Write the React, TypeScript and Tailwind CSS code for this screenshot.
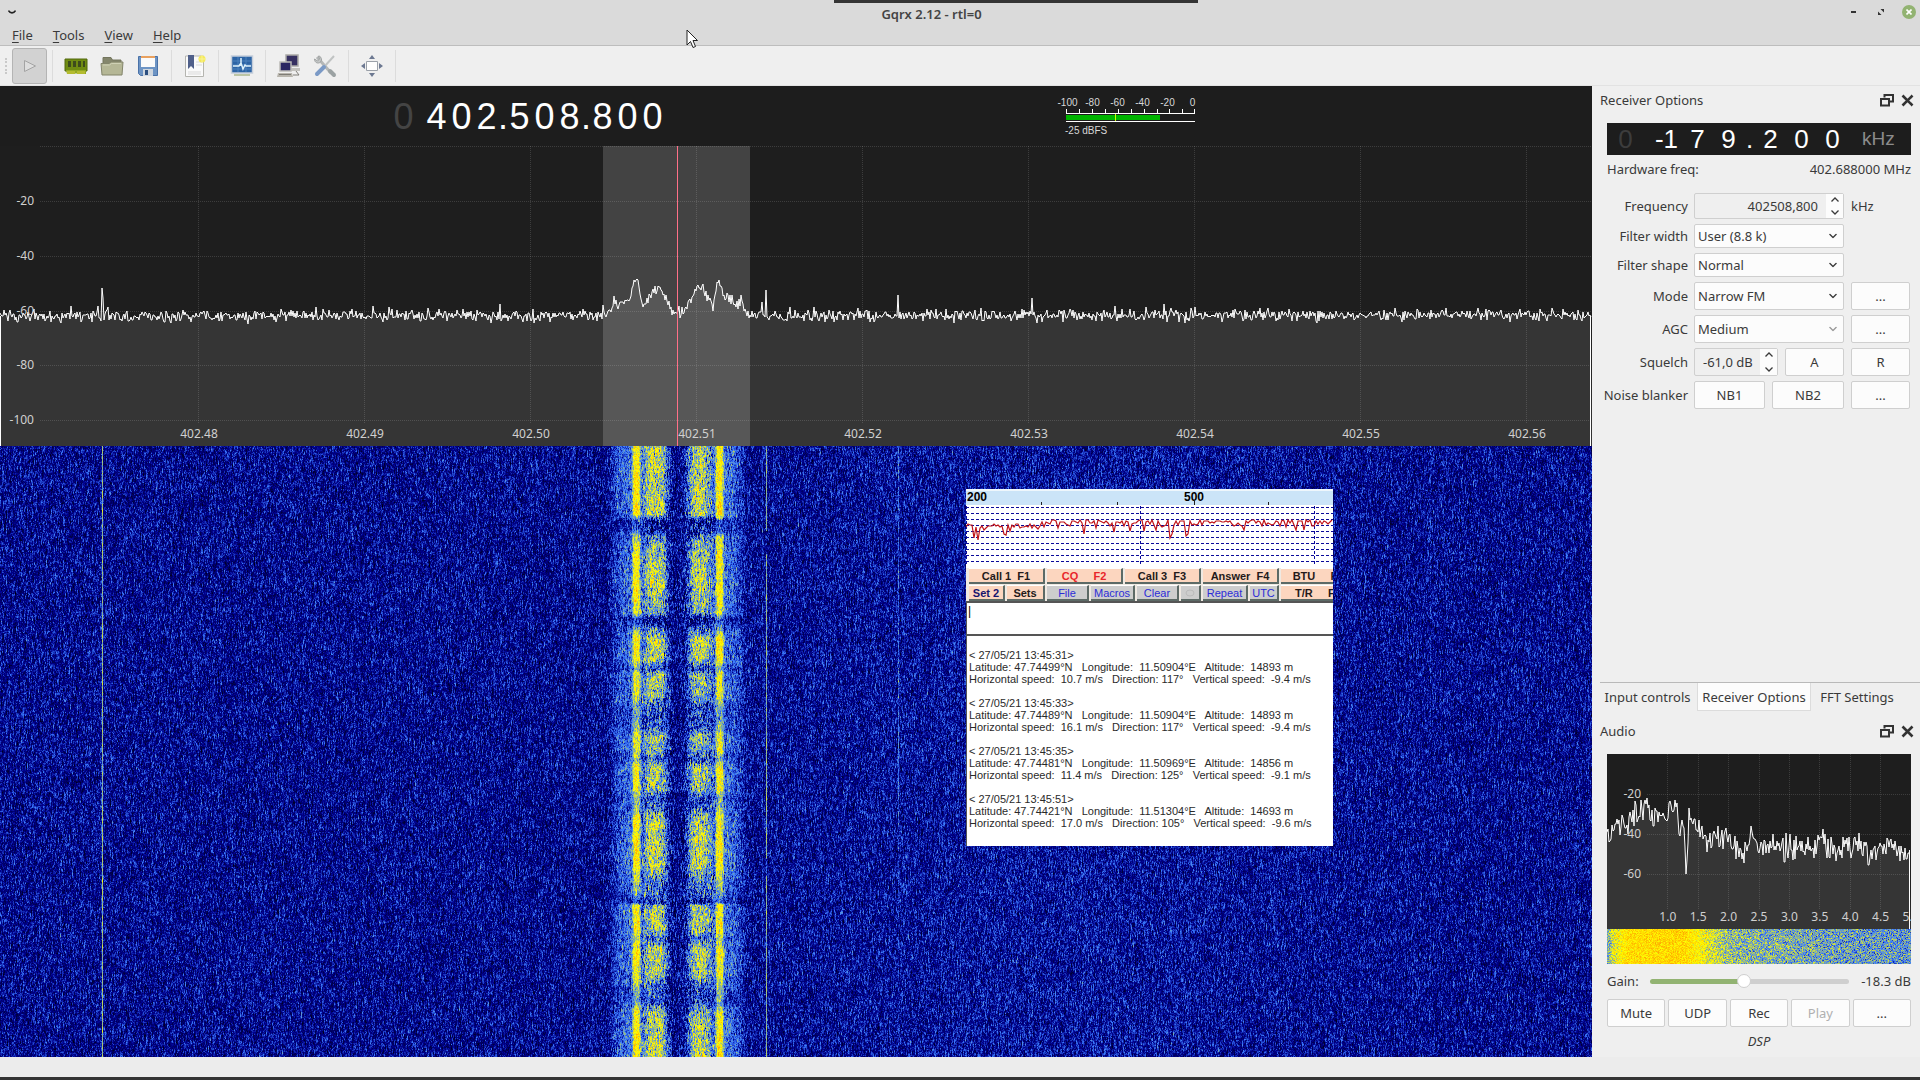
import { useEffect, useRef } from "react"
import type { ReactNode } from "react"
import clsx from "clsx"

const PLOT_W = 1592
const PLOT_H = 300
const FALL_H = 611

const freqLabels = ["402.48", "402.49", "402.50", "402.51", "402.52", "402.53", "402.54", "402.55", "402.56"]
const dbLabels = [
  { text: "-20", y: 55 },
  { text: "-40", y: 110 },
  { text: "-60", y: 165 },
  { text: "-80", y: 219 },
  { text: "-100", y: 274 },
]
const audioLabels = ["1.0", "1.5", "2.0", "2.5", "3.0", "3.5", "4.0", "4.5", "5.0"]

const log = [
  ["< 27/05/21 13:45:31>", "Latitude: 47.74499°N   Longitude:  11.50904°E   Altitude:  14893 m", "Horizontal speed:  10.7 m/s   Direction: 117°   Vertical speed:  -9.4 m/s"],
  ["< 27/05/21 13:45:33>", "Latitude: 47.74489°N   Longitude:  11.50904°E   Altitude:  14893 m", "Horizontal speed:  16.1 m/s   Direction: 117°   Vertical speed:  -9.4 m/s"],
  ["< 27/05/21 13:45:35>", "Latitude: 47.74481°N   Longitude:  11.50969°E   Altitude:  14856 m", "Horizontal speed:  11.4 m/s   Direction: 125°   Vertical speed:  -9.1 m/s"],
  ["< 27/05/21 13:45:51>", "Latitude: 47.74421°N   Longitude:  11.51304°E   Altitude:  14693 m", "Horizontal speed:  17.0 m/s   Direction: 105°   Vertical speed:  -9.6 m/s"],
]

function makeRandom(seed: number) {
  let s = seed
  return () => {
    s = (s + 0x6d2b79f5) | 0
    let t = Math.imul(s ^ (s >>> 15), 1 | s)
    t = (t + Math.imul(t ^ (t >>> 7), 61 | t)) ^ t
    return ((t ^ (t >>> 14)) >>> 0) / 4294967296
  }
}

function interpolate(points: number[][], x: number) {
  for (let i = 1; i < points.length; i++) {
    if (x <= points[i][0]) {
      const [x0, y0] = points[i - 1]
      const [x1, y1] = points[i]
      return y0 + ((y1 - y0) * (x - x0)) / (x1 - x0)
    }
  }
  return points[points.length - 1][1]
}

// signal shape in the spectrum, plot pixels
const signal = [
  [0, 170], [600, 170], [607, 168], [611, 164], [614, 153], [618, 162], [624, 156], [630, 154], [634, 133], [637, 133],
  [642, 162], [650, 148], [655, 143], [659, 142], [665, 152], [672, 165], [676, 165], [682, 167], [690, 154], [697, 140],
  [702, 142], [708, 152], [713, 161], [717, 134], [720, 136], [723, 150], [730, 153], [736, 157], [741, 156], [745, 164],
  [748, 170], [1592, 169],
]
const spikes: Record<number, number> = {
  98: 160, 102: 142, 103: 152, 316: 161, 500: 158, 762: 156, 766: 144, 898: 149, 1032: 152, 1164: 158,
}

function spectrumPoints() {
  const rnd = makeRandom(7)
  const pts: string[] = []
  for (let x = 0; x < PLOT_W; x++) {
    const inSignal = x > 610 && x < 746
    const n = rnd() + rnd() + rnd() - 1.5
    let y = interpolate(signal, x) + n * (inSignal ? 6 : 6)
    if (!inSignal && rnd() > 0.97) y -= 4
    if (spikes[x]) y = spikes[x]
    pts.push(`${x},${Math.round(y)}`)
  }
  return pts.join(" ")
}

const audioShape = [
  [0, 80], [3, 83], [10, 70], [20, 68], [30, 62], [36, 57], [39, 49], [44, 64], [50, 62], [56, 60], [62, 58], [66, 54], [70, 58],
  [73, 76], [77, 72], [79, 118], [82, 60], [88, 66], [94, 74], [100, 86], [110, 82], [120, 90], [128, 92], [134, 98], [142, 88],
  [147, 84], [153, 100], [160, 92], [175, 96], [190, 92], [204, 94], [213, 86], [225, 96], [240, 92], [258, 94], [263, 106],
  [270, 94], [285, 90], [296, 98], [303, 94],
]

function audioPoints() {
  const rnd = makeRandom(21)
  const pts: string[] = []
  for (let x = 0; x < 303; x++) {
    const n = rnd() + rnd() - 1
    pts.push(`${x},${Math.round(interpolate(audioShape, x) + n * 17)}`)
  }
  return pts.join(" ")
}

function scopePoints() {
  const rnd = makeRandom(4)
  const dips = [8, 12, 38, 40, 118, 148, 164, 178, 190, 205, 221, 278, 330, 338]
  const pts: string[] = []
  for (let x = 0; x < 367; x += 2) {
    const base = x < 75 ? 21 : 17
    const dip = dips.some((d) => Math.abs(d - x) < 2) ? 10 : 0
    pts.push(`${x},${Math.round(base + rnd() * rnd() * 9 + dip)}`)
  }
  return pts.join(" ")
}

function palette(level: number): [number, number, number] {
  const i = Math.max(20, Math.min(249, level))
  if (i < 70) return [0, 0, (140 * (i - 20)) / 50]
  if (i < 100) {
    const k = (i - 70) / 30
    return [60 * k, 125 * k, 115 * k + 140]
  }
  if (i < 150) {
    const k = (i - 100) / 50
    return [195 * k + 60, 130 * k + 125, 255 - 255 * k]
  }
  return [255, 255 - (255 * (i - 150)) / 100, 0]
}

// how strong the transmission is over time, waterfall pixels
const activity = [
  [0, 0.95], [68, 1], [74, 0.15], [84, 0.1], [90, 0.6], [98, 0.85], [140, 1], [166, 0.8], [173, 0.1], [178, 0.25], [186, 0.7],
  [194, 1], [214, 0.95], [223, 0.4], [228, 0.9], [248, 0.85], [258, 0.5], [270, 0.4], [282, 0.5], [290, 0.9], [303, 0.8],
  [312, 0.45], [322, 0.95], [342, 0.85], [352, 0.45], [362, 0.55], [372, 0.95], [418, 1], [432, 0.7], [448, 0.45], [456, 0.1],
  [459, 0.9], [482, 0.95], [492, 0.6], [504, 1], [530, 0.85], [542, 0.45], [556, 0.4], [566, 0.9], [611, 1],
]

function bump(x: number, center: number, width: number, power = 4) {
  return Math.exp(-Math.pow(Math.abs(x - center) / width, power))
}

function Waterfall() {
  const ref = useRef<HTMLCanvasElement>(null)

  useEffect(() => {
    const ctx = ref.current?.getContext("2d")
    if (!ctx) return
    const rnd = makeRandom(99)
    const image = ctx.createImageData(PLOT_W, FALL_H)
    const previous = new Float32Array(PLOT_W)
    for (let y = 0; y < FALL_H; y++) {
      const on = interpolate(activity, y)
      for (let x = 0; x < PLOT_W; x++) {
        const raw = (rnd() + rnd() + rnd() - 1.5) * 30
        const noise = previous[x] * 0.5 + raw * 0.75
        previous[x] = noise
        const glow = 4 * bump(x, 1050, 260, 2)
        let level = 69 + noise + glow
        if (x > 600 && x < 754) {
          const skirt = (bump(x, 631, 20, 6) + bump(x, 726, 18, 6)) * 17
          const near = (bump(x, 628, 10, 2) + bump(x, 727, 9, 2)) * 12 * on
          const middle = bump(x, 677, 36, 10) * 12 * (1 - bump(x, 677, 12))
          const blobs = (bump(x, 656, 11, 3) + bump(x, 699, 11, 3)) * 54 * on * on
          const tones = (bump(x, 636, 4) + bump(x, 719, 4)) * (56 * on + 8)
          const rough = noise * 0.5 * Math.min(1, bump(x, 656, 16) + bump(x, 699, 16))
          level += (skirt + middle) * Math.min(1, on + 0.3) + near + blobs + tones + rough
        }
        if (x === 102) level = 124 + noise * 0.6
        if (x === 101) level += 10
        if (x === 766) level = (y > 84 && y < 108) || (y > 412 && y < 430) ? level + 8 : 120 + noise * 0.6
        if (x === 762) level += 9
        if (x === 898) level += y < 380 ? 26 : 10
        if (x === 1032 || x === 1430) level += 7
        const [r, g, b] = palette(level)
        const p = (y * PLOT_W + x) * 4
        image.data[p] = r
        image.data[p + 1] = g
        image.data[p + 2] = b
        image.data[p + 3] = 255
      }
    }
    ctx.putImageData(image, 0, 0)
  }, [])

  return <canvas ref={ref} width={PLOT_W} height={FALL_H} className="absolute inset-0 w-full h-full" />
}

function AudioWaterfall() {
  const ref = useRef<HTMLCanvasElement>(null)

  useEffect(() => {
    const ctx = ref.current?.getContext("2d")
    if (!ctx) return
    const rnd = makeRandom(5)
    const shape = [[0, 112], [6, 142], [20, 163], [75, 166], [92, 152], [104, 138], [125, 122], [160, 118], [220, 113], [304, 108]]
    const image = ctx.createImageData(304, 35)
    for (let y = 0; y < 35; y++) {
      for (let x = 0; x < 304; x++) {
        const spread = x > 12 && x < 95 ? 22 : 36
        const [r, g, b] = palette(interpolate(shape, x) + (rnd() + rnd() - 1) * spread)
        const p = (y * 304 + x) * 4
        image.data[p] = r
        image.data[p + 1] = g
        image.data[p + 2] = b
        image.data[p + 3] = 255
      }
    }
    ctx.putImageData(image, 0, 0)
  }, [])

  return <canvas ref={ref} width={304} height={35} className="block w-full h-[35px]" />
}

function TitleBar() {
  return (
    <header className="bg-[#dadada] border-b border-[#bdbdbd] h-[46px] flex flex-col">
      <div className="h-6 flex items-center">
        <button aria-label="Window menu" className="w-6 h-6 flex items-center justify-center">
          <svg width="8" height="4" viewBox="0 0 8 4" fill="none" stroke="#222" strokeWidth="1.6">
            <path d="M0.5 0.6C2 3.6 6 3.6 7.5 0.6" />
          </svg>
        </button>
        <h1 className="flex-1 text-center text-[13px] leading-6 font-semibold text-[#444] pt-1">Gqrx 2.12 - rtl=0</h1>
        <div className="w-[81px] flex items-center justify-end pr-1">
          <button aria-label="Minimize" className="w-7 h-6 flex items-center justify-center">
            <span className="w-[5px] h-[2px] bg-[#333]" />
          </button>
          <button aria-label="Maximize" className="w-7 h-6 mr-[7px] flex items-center justify-center">
            <svg width="8" height="8" viewBox="0 0 8 8" fill="#333">
              <path d="M3.5 1H7v3.5zM1 3.5V7h3.5z" />
            </svg>
          </button>
          <button aria-label="Close" className="w-[14px] h-[14px] rounded-full bg-[#92b372] flex items-center justify-center">
            <svg width="6" height="6" viewBox="0 0 6 6" stroke="#fff" strokeWidth="1.6">
              <path d="M0.5 0.5l5 5M5.5 0.5l-5 5" />
            </svg>
          </button>
        </div>
      </div>
      <nav className="flex items-center gap-5 pl-3 h-[22px] text-[13px] leading-[22px] text-[#3a3a3a]">
        {["File", "Tools", "View", "Help"].map((m) => (
          <button key={m}>
            <span className="underline underline-offset-2">{m[0]}</span>
            {m.slice(1)}
          </button>
        ))}
      </nav>
    </header>
  )
}

function ToolButton({ label, children }: { label: string; children: ReactNode }) {
  return (
    <button aria-label={label} className="w-9 h-9 flex items-center justify-center">
      <svg width="24" height="24" viewBox="0 0 24 24">
        {children}
      </svg>
    </button>
  )
}

function Separator() {
  return (
    <span className="w-[11px] flex justify-center">
      <span className="w-px h-8 bg-[#dcdcdc]" />
    </span>
  )
}

function Toolbar() {
  return (
    <div className="h-10 bg-[#efefef] flex items-center border-b border-[#e2e2e2]">
      <span className="w-3 flex justify-center">
        <span className="h-4 border-l-2 border-dotted border-[#c9c9c9]" />
      </span>
      <button aria-label="Start" className="w-[35px] h-9 bg-[#d2d2d2] border border-[#b4b4b4] rounded-[3px] flex items-center justify-center">
        <svg width="16" height="16" viewBox="0 0 16 16" fill="#dedede" stroke="#a4a4a4">
          <path d="M2.5 2.5L13.5 8L2.5 13.5z" />
        </svg>
      </button>
      <Separator />
      <ToolButton label="Hardware">
        <path d="M1 5h22v12H1z" fill="#6f8c12" stroke="#53690d" />
        <path d="M2 16h20v4h-9l-1-1-1 1H3z" fill="#93a822" />
        <path d="M4 7h3v6H4zM9 7h3v6H9zM14 7h3v6h-3zM19 7h2v6h-2z" fill="#3d4c1c" />
        <path d="M4 17v3M6 17v3M8 17v3M10 17v3M14 17v3M16 17v3M18 17v3M20 17v3" stroke="#d5cf3c" />
      </ToolButton>
      <ToolButton label="Open">
        <path d="M3 3.500h8l1.500 2.500H21v6H3z" fill="#84866c" stroke="#74765e" />
        <path d="M1 9.500h8l2-1.500h12l-1 13H2z" fill="#b5b796" stroke="#83856b" />
        <path d="M3 11h6.500l2-1.500H21" fill="none" stroke="#cfd1b5" />
      </ToolButton>
      <ToolButton label="Save">
        <path d="M2.500 2.500h19v19H4.500l-2-2z" fill="#6d94c4" stroke="#4a72a8" />
        <path d="M5 2h14v11H5z" fill="#fafafa" />
        <path d="M5 2h14v2H5z" fill="#e9a15f" />
        <path d="M7 15h10v7H7z" fill="#cfd6de" />
        <path d="M9 16h3v5H9z" fill="#2c4f80" />
      </ToolButton>
      <Separator />
      <ToolButton label="Bookmark">
        <path d="M2.500 2h18v20.500h-18z" fill="#fafafa" stroke="#b5b5b0" />
        <path d="M5 1h6v14l-3-3-3 3z" fill="#50608a" />
        <path d="M13 8h6M13 11h6M5 18h13M5 20h13" stroke="#d9d9d9" />
        <circle cx="19" cy="5" r="3.500" fill="#f5ea5a" />
        <path d="M19 1v8M15 5h8" stroke="#f8f29a" />
      </ToolButton>
      <Separator />
      <ToolButton label="DSP">
        <path d="M1.500 2h21v17h-21z" fill="#2d64a5" stroke="#c5cedb" strokeWidth="1.500" />
        <path d="M3 7h18M3 11h18M3 15h18M8 3v15M16 3v15" stroke="#4c82bd" />
        <path d="M3 12h6l2-3 2 6 2-4 1 1h5M11 4v8" fill="none" stroke="#dff2fb" strokeWidth="1.500" />
        <path d="M4 21h16" stroke="#bcc5a5" strokeWidth="2" />
      </ToolButton>
      <Separator />
      <ToolButton label="Remote control">
        <path d="M9 1h12v11H9z" fill="#363061" stroke="#aaa9a7" strokeWidth="1.500" />
        <path d="M11 14h12v3H11z" fill="#c2c1bd" />
        <path d="M3 8h11v9H3z" fill="#2b2662" stroke="#bcbbb7" strokeWidth="1.500" />
        <path d="M1 19h14l1 4H0z" fill="#b8b5ad" />
        <path d="M2 20.500h12M19 17l3 4h-6" fill="none" stroke="#7e7c76" />
      </ToolButton>
      <ToolButton label="Settings">
        <path d="M4 3l14 16" stroke="#b4b7b7" strokeWidth="3" />
        <path d="M17 17l4 4" stroke="#9ba2a3" strokeWidth="4" strokeLinecap="round" />
        <path d="M1.500 5c0 4 4 5 6 3l1-2c0-2-1-4-3-4l1 3-2 2z" fill="#c4c7c7" stroke="#a0a3a3" />
        <path d="M21 2L11 13" stroke="#c0c3c3" strokeWidth="2" />
        <path d="M11 13l-7 7" stroke="#7b9ac6" strokeWidth="4" strokeLinecap="round" />
      </ToolButton>
      <Separator />
      <ToolButton label="Fullscreen">
        <path d="M6.500 7.500h11v9h-11z" fill="#fdfdfd" stroke="#9aa0a8" />
        <path d="M12 1l3 4H9zM12 23l3-4H9zM1 12l4-3v6zM23 12l-4-3v6z" fill="#6c7891" />
      </ToolButton>
      <Separator />
    </div>
  )
}

function SignalMeter() {
  return (
    <div className="w-[150px] font-['Liberation_Sans',sans-serif] text-[10px] leading-3 text-[#d8d8d8]">
      <div className="flex">
        {["-100", "-80", "-60", "-40", "-20", "0"].map((t) => (
          <span key={t} className="w-[25px] text-center">
            {t}
          </span>
        ))}
      </div>
      <svg width="132" height="14" viewBox="0 0 132 14" className="ml-[10px] block">
        <path d="M1.500 0v4M14.500 0v4M27.500 0v4M40.500 0v4M53.500 0v4M66.500 0v4M79.500 0v4M92.500 0v4M104.500 0v4M117.500 0v4M129.500 0v4" stroke="#fff" />
        <path d="M1 4.500h129M1 12.500h129" stroke="#fff" />
        <path d="M1 6h94v5H1z" fill="#00b400" />
        <path d="M50.500 5v7" stroke="#c8ff00" />
      </svg>
      <div className="pl-[10px] pt-[2px]">-25 dBFS</div>
    </div>
  )
}

function FrequencyHeader() {
  return (
    <div className="h-[60px] bg-[#1d1d1d] flex font-['Liberation_Sans',sans-serif]">
      <div className="pl-[391px] flex pt-2 text-[36px] leading-[46px] text-white">
        <span className="w-[25px] mr-2 text-center text-[#444]">0</span>
        {"402.508.800".split("").map((c, i) => (
          <span key={i} className={clsx("flex justify-center", c === "." ? "w-2" : "w-[25px]")}>
            {c}
          </span>
        ))}
      </div>
      <div className="pl-[390px] pt-[11px]">
        <SignalMeter />
      </div>
    </div>
  )
}

function Spectrum() {
  const points = spectrumPoints()
  return (
    <div className="relative h-[300px] bg-[#1e1e1e] overflow-hidden">
      <svg viewBox={`0 0 ${PLOT_W} ${PLOT_H}`} preserveAspectRatio="none" className="absolute inset-0 w-full h-full">
        <polygon points={`0,300 ${points} 1592,300`} fill="#353535" />
        <g stroke="#fff" strokeOpacity="0.14" strokeDasharray="1 1">
          {[0, 55, 110, 165, 219, 274].map((y) => (
            <path key={y} d={`M40 ${y}.5H1592`} />
          ))}
          {freqLabels.map((f, i) => (
            <path key={f} d={`M${198 + i * 166}.5 0V278`} />
          ))}
        </g>
        <rect x="603" y="0" width="147" height="300" fill="#fff" fillOpacity="0.17" />
        <path d="M0.500 170V300M1590.500 170V300" stroke="#fff" />
        <polyline points={points} fill="none" stroke="#fff" />
        <path d="M677.500 0V300" stroke="#ff7088" />
      </svg>
      {dbLabels.map((l) => (
        <span key={l.text} className="absolute left-0 w-[34px] -translate-y-1/2 text-right text-[12px] leading-4 text-[#d0d0d0]" style={{ top: l.y }}>
          {l.text}
        </span>
      ))}
      {freqLabels.map((f, i) => (
        <span key={f} className="absolute bottom-1 -translate-x-1/2 text-[12px] leading-4 text-[#d0d0d0]" style={{ left: `${((199 + i * 166) / PLOT_W) * 100}%` }}>
          {f}
        </span>
      ))}
    </div>
  )
}

function MacroButton({ className, children }: { className: string; children?: ReactNode }) {
  return (
    <button
      className={clsx(
        "h-4 flex items-center justify-center border-r-2 border-b-2 border-[#5c6a66] border-t border-t-white text-[11px] leading-3 whitespace-pre overflow-hidden shrink-0",
        className,
      )}
    >
      {children}
    </button>
  )
}

function DecoderWindow() {
  return (
    <section className="absolute left-[966px] top-[43px] w-[367px] h-[357px] bg-white overflow-hidden flex flex-col font-['Liberation_Sans',sans-serif]">
      <svg viewBox="0 0 367 79" width="367" height="79" className="block shrink-0">
        <rect width="367" height="16" fill="#cbe4f8" />
        <rect width="367" height="2" fill="#eef6fc" />
        <g fontFamily="Liberation Sans, sans-serif" fontWeight="700" fontSize="12">
          <text x="1" y="12">200</text>
          <text x="218" y="12">500</text>
        </g>
        <path d="M75.500 13v3M151.500 13v3M228.500 11v5M302.500 13v3" stroke="#222" />
        <g stroke="#0a0a9a" strokeDasharray="3 2">
          {[18, 24, 30, 36, 42, 48, 54, 60, 66, 72].map((y) => (
            <path key={y} d={`M0 ${y}.5H367`} />
          ))}
          <path d="M174.500 17V76M348.500 17V76M0.500 17V76" />
        </g>
        <polyline points={scopePoints()} transform="translate(0 14)" fill="none" stroke="#c01418" strokeWidth="1.200" />
      </svg>
      <div className="bg-[#efe9e2] pl-[3px] flex flex-col gap-px shrink-0">
        <div className="flex gap-[2px] font-bold text-[#241a1a]">
          <MacroButton className="w-[76px] bg-[#fcd6bf]">Call 1  F1</MacroButton>
          <MacroButton className="w-[76px] bg-[#fcd6bf] text-[#e8262a]">CQ     F2</MacroButton>
          <MacroButton className="w-[76px] bg-[#fcd6bf]">Call 3  F3</MacroButton>
          <MacroButton className="w-[76px] bg-[#fcd6bf]">Answer  F4</MacroButton>
          <MacroButton className="w-[76px] bg-[#fcd6bf]">BTU     F5</MacroButton>
        </div>
        <div className="flex gap-[2px] text-[#2c2cd8]">
          <MacroButton className="w-9 bg-[#fcd6bf] font-bold text-[#15156e]">Set 2</MacroButton>
          <MacroButton className="w-[38px] bg-[#fcd6bf] font-bold text-[#241a1a]">Sets</MacroButton>
          <MacroButton className="w-[42px] bg-[#cdcdcd]">File</MacroButton>
          <MacroButton className="w-11 bg-[#cdcdcd]">Macros</MacroButton>
          <MacroButton className="w-[42px] bg-[#cdcdcd]">Clear</MacroButton>
          <MacroButton className="w-5 bg-[#cdcdcd]">
            <svg width="12" height="10" viewBox="0 0 12 10" fill="none" stroke="#bbb">
              <ellipse cx="6" cy="5" rx="4" ry="3" />
            </svg>
          </MacroButton>
          <MacroButton className="w-[45px] bg-[#cdcdcd]">Repeat</MacroButton>
          <MacroButton className="w-[29px] bg-[#cdcdcd]">UTC</MacroButton>
          <MacroButton className="w-[76px] bg-[#fcd6bf] font-bold text-[#241a1a]">T/R     F6</MacroButton>
        </div>
      </div>
      <textarea
        aria-label="Transmit text"
        defaultValue="|"
        className="block h-[35px] shrink-0 w-full resize-none bg-white border-t-2 border-b-2 border-l border-[#555] px-px text-[12px] leading-4 text-black"
      />
      <div className="flex-1 border-l border-[#555] pl-[2px] pt-[13px] flex flex-col gap-3 text-[11px] leading-3 text-[#2a2a2a] whitespace-pre">
        {log.map((entry) => (
          <div key={entry[0]}>
            {entry.map((line) => (
              <p key={line}>{line}</p>
            ))}
          </div>
        ))}
      </div>
    </section>
  )
}

function PanelTitle({ title }: { title: string }) {
  return (
    <div className="h-7 pl-2 pr-[6px] flex items-center justify-between">
      <h2>{title}</h2>
      <div className="flex items-center gap-[7px]">
        <button aria-label={`Float ${title}`}>
          <svg width="14" height="14" viewBox="0 0 14 14" fill="none" stroke="#333" strokeWidth="2">
            <path d="M4.500 4.500V2H13v6.500H9.500" />
            <path d="M1 6h8v6.500H1z" />
          </svg>
        </button>
        <button aria-label={`Close ${title}`}>
          <svg width="13" height="13" viewBox="0 0 13 13" stroke="#333" strokeWidth="2.600">
            <path d="M1.500 1.500l10 10M11.500 1.500l-10 10" />
          </svg>
        </button>
      </div>
    </div>
  )
}

function Chevron({ up, className }: { up?: boolean; className?: string }) {
  return (
    <svg width="8" height="5" viewBox="0 0 8 5" fill="none" stroke="currentColor" strokeWidth="1.300" className={className}>
      <path d={up ? "M0.500 4.500L4 1L7.500 4.500" : "M0.500 0.500L4 4L7.500 0.500"} />
    </svg>
  )
}

function PushButton({ className, disabled, children }: { className?: string; disabled?: boolean; children: ReactNode }) {
  return (
    <button disabled={disabled} className={clsx("h-7 bg-[#fcfcfc] border border-[#cfcfcf] rounded-[2px] disabled:text-[#b0b0b0]", className)}>
      {children}
    </button>
  )
}

function Row({ label, id, children }: { label: string; id?: string; children: ReactNode }) {
  return (
    <div className="flex items-center">
      <label htmlFor={id} className="w-[81px] mr-[6px] flex justify-end whitespace-nowrap">
        {label}
      </label>
      <div className="flex items-center gap-[7px]">{children}</div>
    </div>
  )
}

function Combo({ id, value, className, faded }: { id: string; value: string; className: string; faded?: boolean }) {
  return (
    <div className={clsx("relative w-[150px]", className)}>
      <select id={id} className="appearance-none w-full h-full bg-[#fcfcfc] border border-[#cfcfcf] rounded-[2px] pl-[3px]">
        <option>{value}</option>
      </select>
      <Chevron className={clsx("absolute right-[7px] top-1/2 -translate-y-1/2 pointer-events-none", faded && "text-[#999]")} />
    </div>
  )
}

function SpinBox({ id, value, className, inputClass }: { id: string; value: string; className: string; inputClass: string }) {
  return (
    <div className={clsx("flex border border-[#cfcfcf] rounded-[2px] bg-[#efefef]", className)}>
      <input id={id} defaultValue={value} className={clsx("min-w-0 flex-1 bg-transparent", inputClass)} />
      <div className="w-[17px] bg-[#fcfcfc] flex flex-col items-center justify-between py-[3px]">
        <button aria-label="Increase">
          <Chevron up className="block" />
        </button>
        <button aria-label="Decrease">
          <Chevron className="block" />
        </button>
      </div>
    </div>
  )
}

function OffsetDisplay() {
  return (
    <div className="h-8 bg-[#1d1d1d] flex items-center pl-[3px] font-['Liberation_Sans',sans-serif] text-[26px] leading-8 text-white">
      <span className="w-[31px] mr-[10px] text-center text-[#3c3c3c]">0</span>
      {["-1", "7", "9", ".", "2", "0", "0"].map((c, i) => (
        <span key={i} className={clsx("text-center", c === "." ? "w-[11px]" : "w-[31px]")}>
          {c}
        </span>
      ))}
      <span className="pl-[14px] text-[19px] text-[#8c8c8c]">kHz</span>
    </div>
  )
}

function ReceiverOptions() {
  return (
    <section>
      <PanelTitle title="Receiver Options" />
      <div className="pl-[15px] pr-[9px] mt-[9px]">
        <OffsetDisplay />
        <div className="h-7 flex items-center justify-between">
          <span>Hardware freq:</span>
          <span>402.688000 MHz</span>
        </div>
        <div className="mt-[10px] flex flex-col gap-[5px]">
          <Row label="Frequency" id="freq">
            <SpinBox id="freq" value="402508,800" className="w-[150px] h-[26px]" inputClass="text-right pr-2" />
            <span>kHz</span>
          </Row>
          <Row label="Filter width" id="width">
            <Combo id="width" value="User (8.8 k)" className="h-6" />
          </Row>
          <Row label="Filter shape" id="shape">
            <Combo id="shape" value="Normal" className="h-6" />
          </Row>
          <Row label="Mode" id="mode">
            <Combo id="mode" value="Narrow FM" className="h-7" />
            <PushButton className="w-[59px]">...</PushButton>
          </Row>
          <Row label="AGC" id="agc">
            <Combo id="agc" value="Medium" className="h-7" faded />
            <PushButton className="w-[59px]">...</PushButton>
          </Row>
          <Row label="Squelch" id="squelch">
            <SpinBox id="squelch" value="-61,0 dB" className="w-[84px] h-7" inputClass="pl-2" />
            <PushButton className="w-[59px]">A</PushButton>
            <PushButton className="w-[59px]">R</PushButton>
          </Row>
          <Row label="Noise blanker" id="nb1">
            <button id="nb1" className="w-[71px] h-7 bg-[#fcfcfc] border border-[#cfcfcf] rounded-[2px]">
              NB1
            </button>
            <PushButton className="w-[72px]">NB2</PushButton>
            <PushButton className="w-[59px]">...</PushButton>
          </Row>
        </div>
      </div>
    </section>
  )
}

function AudioPanel() {
  const points = audioPoints()
  return (
    <section className="pt-[6px]">
      <PanelTitle title="Audio" />
      <div className="pl-[15px] pr-[9px] mt-[9px]">
        <div className="relative h-[175px] bg-[#1e1e1e] overflow-hidden">
          <svg viewBox="0 0 304 175" preserveAspectRatio="none" className="absolute inset-0 w-full h-full">
            <polygon points={`0,175 ${points} 304,175`} fill="#353535" />
            <g stroke="#fff" strokeOpacity="0.14" strokeDasharray="1 1">
              <path d="M40 40.500H304M40 80.500H304M40 120.500H304" />
              <path d="M60.500 0V155M91.500 0V155M121.500 0V155M152.500 0V155M182.500 0V155M212.500 0V155M243.500 0V155M273.500 0V155" />
            </g>
            <polyline points={points} fill="none" stroke="#fff" />
            <path d="M302.500 96V175" stroke="#fff" />
          </svg>
          {["-20", "-40", "-60"].map((t, i) => (
            <span key={t} className="absolute left-0 w-[34px] -translate-y-1/2 text-right text-[12px] leading-4 text-[#d0d0d0]" style={{ top: 40 + i * 40 }}>
              {t}
            </span>
          ))}
          {audioLabels.map((t, i) => (
            <span key={t} className="absolute bottom-1 -translate-x-1/2 text-[12px] leading-4 text-[#d0d0d0]" style={{ left: `${20 + i * 10}%` }}>
              {t}
            </span>
          ))}
        </div>
        <AudioWaterfall />
        <div className="h-[34px] flex items-center">
          <label htmlFor="gain" className="w-[43px]">
            Gain:
          </label>
          <input
            id="gain"
            type="range"
            min="0"
            max="100"
            defaultValue="47"
            className="appearance-none bg-transparent flex-1 mr-[6px] min-w-0 h-5 [&::-webkit-slider-runnable-track]:h-[5px] [&::-webkit-slider-runnable-track]:rounded-full [&::-webkit-slider-runnable-track]:bg-[linear-gradient(to_right,#92b372_47%,#cfcfcf_47%)] [&::-webkit-slider-thumb]:appearance-none [&::-webkit-slider-thumb]:size-[14px] [&::-webkit-slider-thumb]:-mt-[5px] [&::-webkit-slider-thumb]:rounded-full [&::-webkit-slider-thumb]:bg-white [&::-webkit-slider-thumb]:border [&::-webkit-slider-thumb]:border-[#cfcfcf]"
          />
          <output htmlFor="gain" className="w-14 text-right">
            -18.3 dB
          </output>
        </div>
        <div className="pt-px grid grid-cols-5 gap-[3px]">
          <PushButton>Mute</PushButton>
          <PushButton>UDP</PushButton>
          <PushButton>Rec</PushButton>
          <PushButton disabled>Play</PushButton>
          <PushButton>...</PushButton>
        </div>
        <p className="h-[30px] leading-7 text-center italic">DSP</p>
      </div>
    </section>
  )
}

export default function App() {
  return (
    <div className="relative min-h-screen flex flex-col bg-[#efefef] font-['Noto_Sans',sans-serif] text-[13px] leading-5 text-[#3a3a3a]">
      <TitleBar />
      <Toolbar />
      <main className="flex-1 flex">
        <div className="flex-1 min-w-0 flex flex-col">
          <FrequencyHeader />
          <Spectrum />
          <div className="relative flex-1 min-h-[420px] overflow-hidden">
            <Waterfall />
            <DecoderWindow />
          </div>
        </div>
        <aside className="w-[328px] shrink-0 flex flex-col">
          <ReceiverOptions />
          <div className="flex-1" />
          <div role="tablist" className="ml-2 border-t border-[#b9b9b9] h-[29px] flex items-center">
            <button role="tab" className="w-[97px] pr-[2px]">
              Input controls
            </button>
            <button role="tab" aria-selected="true" className="w-[114px] h-7 bg-[#fcfcfc] border-x border-b border-[#dcdcdc]">
              Receiver Options
            </button>
            <button role="tab" className="w-[92px]">
              FFT Settings
            </button>
          </div>
          <AudioPanel />
        </aside>
      </main>
      <footer className="h-[23px] bg-[#ececec] border-b-[3px] border-[#343434]" />
      <div className="absolute top-0 left-[834px] w-[364px] h-[3px] bg-[#343434]" />
      <svg width="12" height="20" viewBox="0 0 12 20" className="absolute left-[686px] top-[29px]">
        <path d="M1 1v15l3.500-3.500 2.500 6 2.500-1-2.500-6H11.500z" fill="#fff" stroke="#222" />
      </svg>
    </div>
  )
}
